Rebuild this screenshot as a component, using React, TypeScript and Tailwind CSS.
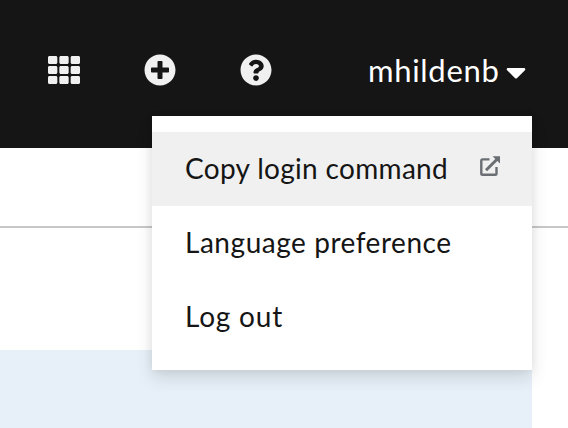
import { FaTh, FaPlusCircle, FaQuestionCircle, FaCaretDown } from "react-icons/fa";

function ExternalLinkIcon() {
  return (
    <svg width="21" height="21" viewBox="0 0 21 21" fill="none" stroke="#6a6e73" aria-hidden="true">
      <path d="M9.5 3.4H2.6Q1.3 3.4 1.3 4.7V17.4Q1.3 18.7 2.6 18.7H15.2Q16.5 18.7 16.5 17.4V11" strokeWidth="2.4" />
      <path d="M6 14.3L16.8 3.5" strokeWidth="3" />
      <path d="M12.6 .3H20V7.6Z" fill="#6a6e73" stroke="none" />
    </svg>
  );
}

function Masthead() {
  return (
    <header className="flex h-[148px] items-start bg-[#151515] text-[#f0f0f0]">
      <button className="ml-12 mt-[54px] text-[32px]" aria-label="Applications">
        <FaTh />
      </button>
      <button className="ml-16 mt-[54px] text-[32px]" aria-label="Create">
        <FaPlusCircle />
      </button>
      <button className="ml-16 mt-[54px] text-[32px]" aria-label="Help">
        <FaQuestionCircle />
      </button>
      <button className="ml-[96px] mt-[50px] flex h-10 items-center text-white">
        <span className="w-[132px] whitespace-nowrap text-left text-[31px] tracking-[0.7px]">mhildenb</span>
        <FaCaretDown className="mt-[3px] text-[32px]" />
      </button>
    </header>
  );
}

const items = [
  { label: "Copy login command", className: "bg-[#f0f0f0] tracking-[0.32px]", external: true },
  { label: "Language preference", className: "tracking-[0.54px]", external: false },
  { label: "Log out", className: "tracking-[0.8px]", external: false },
];

function UserMenu() {
  return (
    <ul className="absolute left-[152px] top-[116px] h-[254px] w-[380px] bg-white py-4 shadow-[0_8px_16px_rgba(3,3,3,0.12),0_0_8px_rgba(3,3,3,0.06)]">
      {items.map((item) => (
        <li
          key={item.label}
          className={`flex h-[74px] items-center justify-between whitespace-nowrap pl-[33px] pr-[31px] text-[28px] text-[#151515] ${item.className}`}
        >
          <span className="mb-[3px]">{item.label}</span>
          {item.external && (
            <span className="mb-[5px]">
              <ExternalLinkIcon />
            </span>
          )}
        </li>
      ))}
    </ul>
  );
}

export default function App() {
  return (
    <div className="relative h-[428px] w-[568px] overflow-hidden bg-white font-['Lato','Open_Sans',sans-serif]">
      <Masthead />
      <div className="h-20 border-b-2 border-[#c7c7c7]" />
      <div className="mt-[122px] h-[78px] w-[532px] bg-[#e7f0f8]" />
      <UserMenu />
    </div>
  );
}
